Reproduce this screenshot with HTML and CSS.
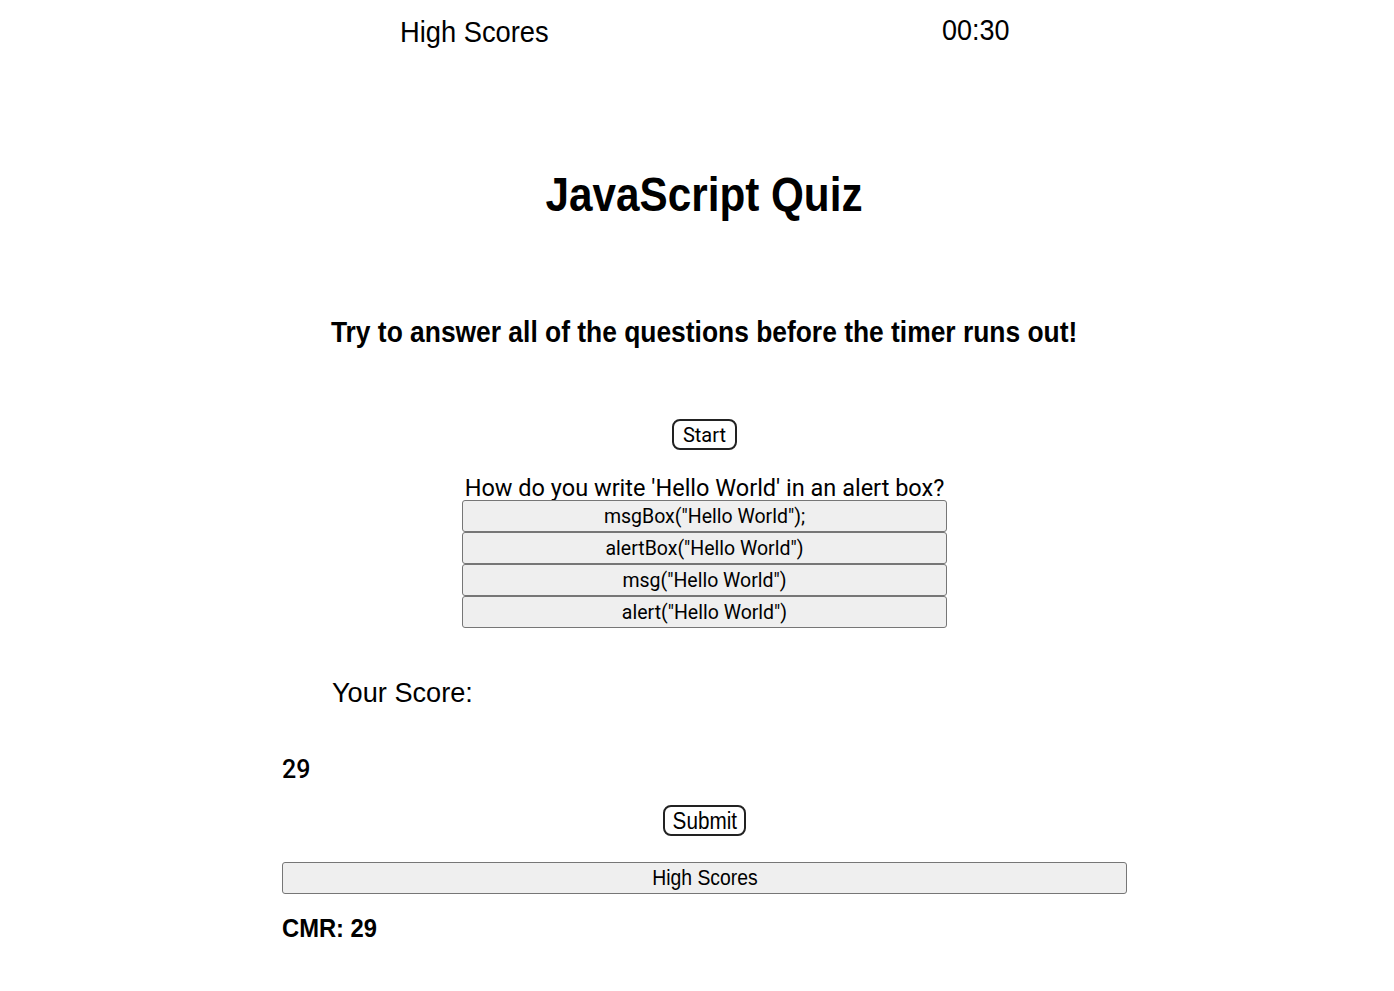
FILE: index.html
```html
<!DOCTYPE html>
<html lang="en">
<head>
<meta charset="utf-8">
<title>JavaScript Quiz</title>
<link rel="stylesheet" href="styles.css">
</head>
<body>
<div class="page">
  <header class="topbar">
    <a class="hs-link"><span class="narrow n91">High Scores</span></a>
    <span class="timer"><span class="narrow n93">00:30</span></span>
  </header>
  <h1 class="title"><span class="narrow n88">JavaScript Quiz</span></h1>
  <h2 class="intro"><span class="narrow n91">Try to answer all of the questions before the timer runs out!</span></h2>
  <div class="start-row"><button class="pill start">Start</button></div>
  <div class="quiz">
    <div class="question">How do you write 'Hello World' in an alert box?</div>
    <button class="option">msgBox("Hello World");</button>
    <button class="option">alertBox("Hello World")</button>
    <button class="option">msg("Hello World")</button>
    <button class="option">alert("Hello World")</button>
  </div>
  <h2 class="score-title"><span class="narrow n97">Your Score:</span></h2>
  <div class="score">29</div>
  <div class="submit-row"><button class="pill submit"><span class="narrow n90">Submit</span></button></div>
  <button class="hs-btn"><span class="narrow n88">High Scores</span></button>
  <div class="cmr"><span class="narrow n95">CMR: 29</span></div>
</div>
</body>
</html>
```
FILE: styles.css
```css
html, body { margin: 0; padding: 0; background: #fff; color: #000; }
body { font-family: "Liberation Sans", Arial, sans-serif; }
.narrow { display: inline-block; transform-origin: center; }
.n88 { transform: scaleX(0.88); }
.n90 { transform: scaleX(0.9); }
.n91 { transform: scaleX(0.91); }
.n93 { transform: scaleX(0.93); }
.n95 { transform: scaleX(0.95); }
.n97 { transform: scaleX(0.97); }
.page { width: 845px; margin-left: 282px; }
.topbar { display: flex; justify-content: space-between; padding: 14px 117px 0 118px; height: 36px; }
.hs-link { font-size: 30px; line-height: 36px; }
.hs-link .narrow { transform-origin: left center; }
.timer { font-size: 29px; line-height: 32px; }
.timer .narrow { transform-origin: right center; }
.title { margin: 0; padding-top: 115px; text-align: center; font-size: 48px; font-weight: bold; line-height: 60px; }
.intro { margin: 0; padding-top: 90px; text-align: center; font-size: 29px; font-weight: bold; line-height: 34px; white-space: nowrap; }
.start-row { display: flex; justify-content: center; padding-top: 70px; }
.pill { font-family: Roboto, "Liberation Sans", sans-serif; font-size: 20px; background: #fff; border: 2px solid #222; border-radius: 8px; height: 31px; color: #000; line-height: 26px; }
.start { padding: 0 9px; }
.submit { padding: 0 4px; font-family: "Liberation Sans", sans-serif; font-size: 23px; }
.quiz { width: 485px; margin: 26px auto 0; display: flex; flex-direction: column; }
.question { font-family: Roboto, "Liberation Sans", sans-serif; font-size: 23.5px; line-height: 24px; text-align: center; white-space: nowrap; }
.option { font-family: Roboto, "Liberation Sans", sans-serif; font-size: 19.5px; height: 32px; background: #efefef; border: 1px solid #767676; border-radius: 3px; color: #000; padding: 0; }
.score-title { margin: 0; padding: 49px 0 0 50px; font-size: 28px; font-weight: normal; line-height: 32px; }
.score-title .narrow { transform-origin: left center; }
.score { font-family: Roboto, "Liberation Sans", sans-serif; font-size: 25px; font-weight: 500; padding-top: 47px; line-height: 28px; }
.submit-row { display: flex; justify-content: center; padding-top: 21px; }
.hs-btn { display: block; width: 845px; height: 32px; margin-top: 26px; font-size: 22px; background: #efefef; border: 1px solid #767676; border-radius: 3px; font-family: "Liberation Sans", sans-serif; color: #000; padding: 0; }
.cmr { font-size: 25px; font-weight: bold; padding-top: 20px; }
.cmr .narrow { transform-origin: left center; }
```
